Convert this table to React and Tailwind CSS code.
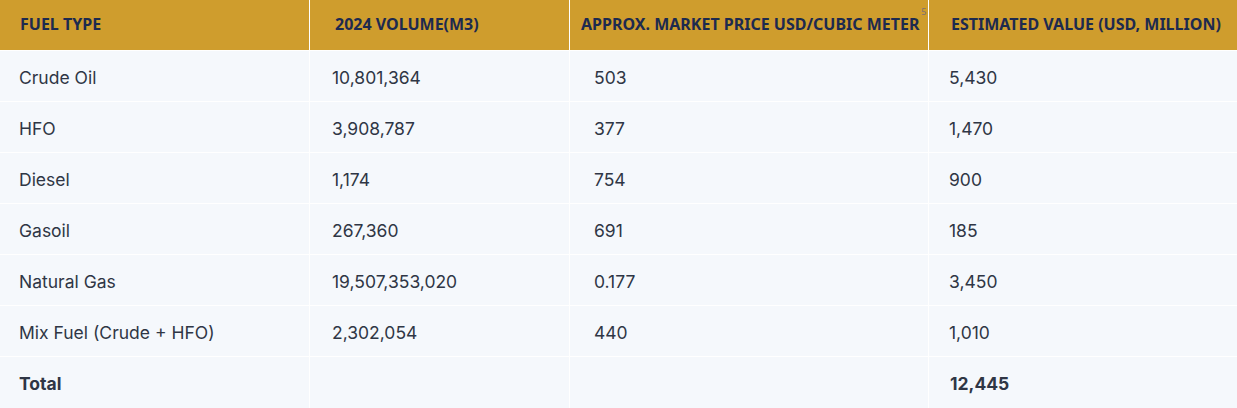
import React from "react";

const rows = [
  ["Crude Oil", "10,801,364", "503", "5,430"],
  ["HFO", "3,908,787", "377", "1,470"],
  ["Diesel", "1,174", "754", "900"],
  ["Gasoil", "267,360", "691", "185"],
  ["Natural Gas", "19,507,353,020", "0.177", "3,450"],
  ["Mix Fuel (Crude + HFO)", "2,302,054", "440", "1,010"],
];

const head =
  "h-[50px] bg-[#cf9d2d] flex items-center pb-[3px] text-[16px] font-bold text-[#1d2a4f] uppercase whitespace-nowrap";
const cell =
  "h-[50px] bg-[#f5f8fc] flex items-center pt-[4px] text-[17.5px] text-[#2f3645]";

export default function App() {
  return (
    <div
      className="w-[1237px] h-[408px] bg-white overflow-hidden"
      style={{ fontFamily: "Inter, 'Noto Sans', sans-serif" }}
    >
      <div className="grid grid-cols-[309px_259px_358px_1fr] gap-px bg-white">
        <div className={`${head} pl-[20px]`} style={{ fontFamily: "'Noto Sans', sans-serif" }}>
          Fuel Type
        </div>
        <div className={`${head} pl-[25px]`} style={{ fontFamily: "'Noto Sans', sans-serif" }}>
          2024 Volume(M3)
        </div>
        <div className={`${head} pl-[11px]`} style={{ fontFamily: "'Noto Sans', sans-serif" }}>
          <span className="relative">
            Approx. Market Price USD/Cubic Meter
            <span className="absolute -right-[7px] top-[-7px] text-[9px] font-normal text-[#7d6f73]">5</span>
          </span>
        </div>
        <div className={`${head} pl-[22px]`} style={{ fontFamily: "'Noto Sans', sans-serif" }}>
          Estimated Value (USD, Million)
        </div>
        {rows.map((r, i) => (
          <React.Fragment key={i}>
            <div className={`${cell} pl-[19px]`}>{r[0]}</div>
            <div className={`${cell} pl-[22px]`}>{r[1]}</div>
            <div className={`${cell} pl-[24px]`}>{r[2]}</div>
            <div className={`${cell} pl-[20px]`}>{r[3]}</div>
          </React.Fragment>
        ))}
        <div className={`${cell} h-[51px] pl-[19px] font-bold`}>Total</div>
        <div className={`${cell} h-[51px]`}></div>
        <div className={`${cell} h-[51px]`}></div>
        <div className={`${cell} h-[51px] pl-[21px] font-bold`}>12,445</div>
      </div>
    </div>
  );
}
